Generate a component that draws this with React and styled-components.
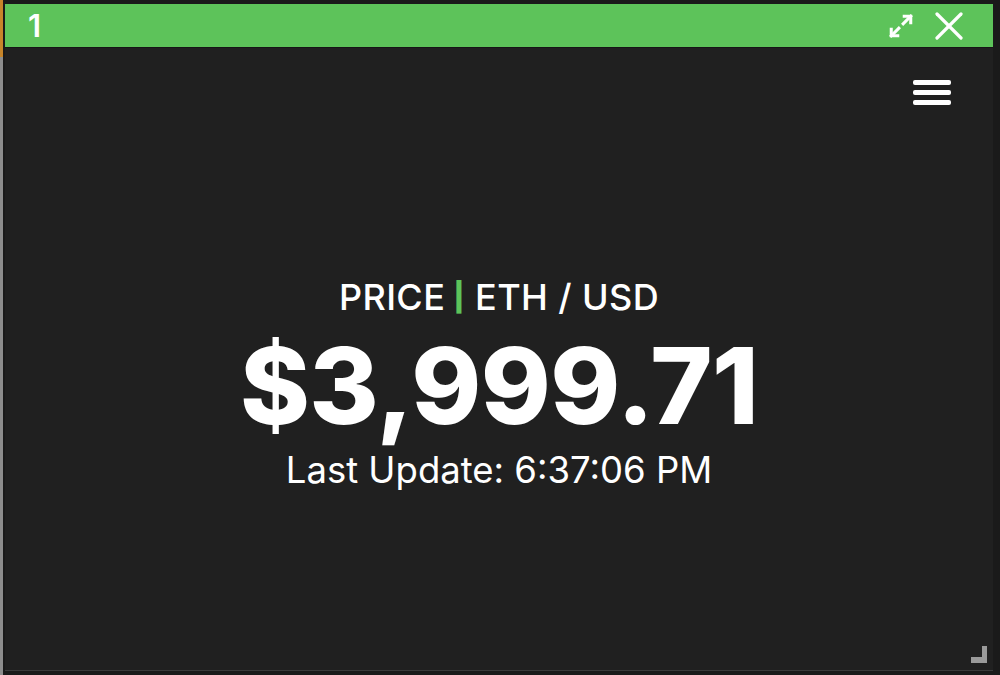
import React from 'react';
import styled, { createGlobalStyle } from 'styled-components';

const GlobalStyle = createGlobalStyle`
  html, body {
    margin: 0;
    padding: 0;
    background: #1a1a1a;
  }
  * {
    box-sizing: border-box;
  }
`;

const Desktop = styled.div`
  width: 1000px;
  height: 675px;
  display: flex;
  background: #1a1a1a;
  font-family: Inter, "Noto Sans", sans-serif;
  overflow: hidden;
`;

const EdgeStrip = styled.div`
  width: 3px;
  display: flex;
  flex-direction: column;
`;

const EdgeTop = styled.div`
  height: 57px;
  background: #c7852a; /* orange tab */
`;

const EdgeRest = styled.div`
  flex: 1;
  background: #8d8d8d;
`;

const Window = styled.div`
  margin: 4px 0 4px 2px;
  width: 988px;
  display: flex;
  flex-direction: column;
  background: #202020;
  border-bottom: 1px solid #3a3a3a;
`;

const TitleBar = styled.div`
  height: 44px;
  background: #5dc35a;
  display: flex;
  align-items: center;
  padding: 0 30px 0 23px;
  border-bottom: 1px solid #161616;
`;

const Title = styled.span`
  flex: 1;
  color: #ffffff;
  font-size: 31px;
  font-weight: 600;
  line-height: 1;
`;

const IconButton = styled.button`
  display: flex;
  align-items: center;
  justify-content: center;
  background: none;
  border: none;
  padding: 0;
  margin-left: ${(p) => p.$gap || 0}px;
  color: #ffffff;
  cursor: pointer;
`;

const Body = styled.div`
  flex: 1;
  position: relative;
  display: flex;
  flex-direction: column;
`;

const Toolbar = styled.div`
  display: flex;
  justify-content: flex-end;
  padding: 32px 42px 0 0;
`;

const Hamburger = styled.button`
  display: flex;
  flex-direction: column;
  gap: 5px;
  background: none;
  border: none;
  padding: 0;
  cursor: pointer;
`;

const Bar = styled.span`
  display: block;
  width: 38px;
  height: 5px;
  border-radius: 2px;
  background: #ffffff;
`;

const Content = styled.div`
  flex: 1;
  display: flex;
  flex-direction: column;
  align-items: center;
  padding-top: 170px;
  color: #ffffff;
`;

const Pair = styled.div`
  display: flex;
  align-items: baseline;
  font-size: 36px;
  font-weight: 500;
  line-height: 44px;
  letter-spacing: 0.4px;
  white-space: pre;
`;

/* short, thick green rule the height of the capitals */
const Divider = styled.span`
  display: inline-block;
  margin: 0 9px 0 7px;
  color: #5dc35a;
  font-weight: 700;
  transform: scaleY(0.78);
`;

const Price = styled.div`
  margin-top: 5px;
  font-size: 106px;
  font-weight: 800;
  line-height: 124px;
  letter-spacing: -0.6px;
`;

const Updated = styled.div`
  font-size: 36.5px;
  font-weight: 400;
  line-height: 44px;
`;

const ResizeGrip = styled.svg`
  position: absolute;
  right: 5px;
  bottom: 6px;
`;

const MaximizeIcon = () => (
  <svg width="28" height="26" viewBox="0 0 24 24" fill="none" stroke="currentColor" strokeWidth="2.8" strokeLinecap="square">
    <polyline points="15 3 21 3 21 9" />
    <polyline points="9 21 3 21 3 15" />
    <line x1="21" y1="3" x2="14" y2="10" />
    <line x1="3" y1="21" x2="10" y2="14" />
  </svg>
);

const CloseIcon = () => (
  <svg width="28" height="28" viewBox="0 0 28 28" fill="none" stroke="currentColor" strokeWidth="3.2" strokeLinecap="round">
    <line x1="2" y1="2" x2="26" y2="26" />
    <line x1="26" y1="2" x2="2" y2="26" />
  </svg>
);

const App = () => {
  return (
    <>
      <GlobalStyle />
      <Desktop>
        <EdgeStrip>
          <EdgeTop />
          <EdgeRest />
        </EdgeStrip>
        <Window>
          <TitleBar>
            <Title>1</Title>
            <IconButton aria-label="Maximize">
              <MaximizeIcon />
            </IconButton>
            <IconButton $gap={20} aria-label="Close">
              <CloseIcon />
            </IconButton>
          </TitleBar>
          <Body>
            <Toolbar>
              <Hamburger aria-label="Menu">
                <Bar />
                <Bar />
                <Bar />
              </Hamburger>
            </Toolbar>
            <Content>
              <Pair>
                <span>PRICE</span>
                <Divider>|</Divider>
                <span>ETH / USD</span>
              </Pair>
              <Price>$3,999.71</Price>
              <Updated>Last Update: 6:37:06 PM</Updated>
            </Content>
            <ResizeGrip width="18" height="18" viewBox="0 0 18 18">
              <path d="M12 0h5v17H1v-6h11z" fill="#9a9a9a" />
            </ResizeGrip>
          </Body>
        </Window>
      </Desktop>
    </>
  );
};

export default App;
